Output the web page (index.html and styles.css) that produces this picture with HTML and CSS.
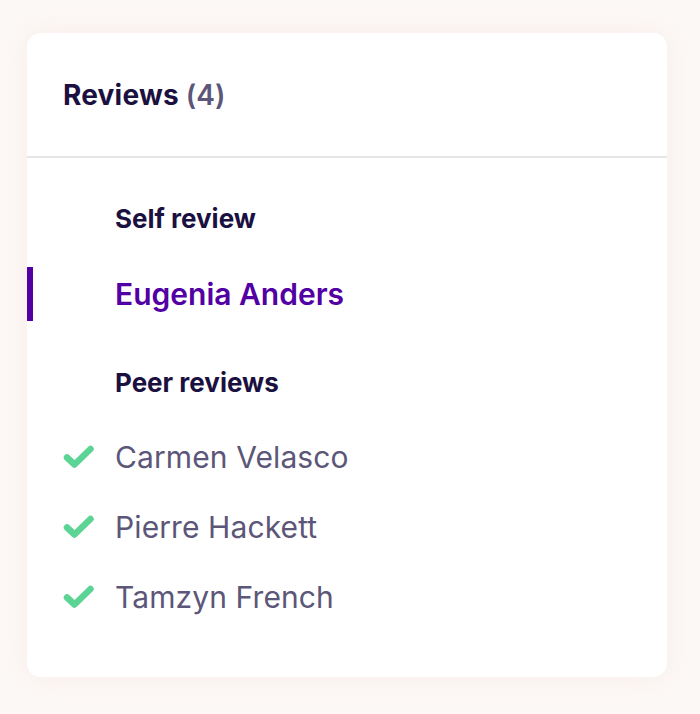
FILE: index.html
```html
<!DOCTYPE html>
<html>
<head>
<meta charset="utf-8">
<link rel="stylesheet" href="styles.css">
</head>
<body>
<div class="page">
  <section class="card">
    <header class="card-header">
      <h2 class="title">Reviews <span class="count">(4)</span></h2>
    </header>
    <div class="card-body">
      <div class="group-label">Self review</div>
      <div class="item active"><span class="marker"></span><span class="icon"></span><span class="name">Eugenia Anders</span></div>
      <div class="group-label peer">Peer reviews</div>
      <div class="item done first"><span class="icon"><svg viewBox="0 0 32 24" width="32" height="24"><path d="M4 12.5 L11.5 19.5 L27.5 4" fill="none" stroke="#5cd495" stroke-width="6.5" stroke-linecap="round" stroke-linejoin="round"/></svg></span><span class="name">Carmen Velasco</span></div>
      <div class="item done"><span class="icon"><svg viewBox="0 0 32 24" width="32" height="24"><path d="M4 12.5 L11.5 19.5 L27.5 4" fill="none" stroke="#5cd495" stroke-width="6.5" stroke-linecap="round" stroke-linejoin="round"/></svg></span><span class="name">Pierre Hackett</span></div>
      <div class="item done"><span class="icon"><svg viewBox="0 0 32 24" width="32" height="24"><path d="M4 12.5 L11.5 19.5 L27.5 4" fill="none" stroke="#5cd495" stroke-width="6.5" stroke-linecap="round" stroke-linejoin="round"/></svg></span><span class="name">Tamzyn French</span></div>
    </div>
  </section>
</div>
</body>
</html>
```
FILE: styles.css
```css
html, body {
  margin: 0;
  padding: 0;
  background: #fcf8f6;
}
body {
  font-family: Inter, "Noto Sans", sans-serif;
  width: 700px;
  height: 714px;
  overflow: hidden;
}
.page {
  padding: 33px 33px 0 27px;
}
.card {
  width: 640px;
  height: 644px;
  background: #ffffff;
  border-radius: 14px;
  box-shadow: 0 0 24px rgba(240, 215, 205, 0.25);
}
.card-header {
  height: 125px;
  border-bottom: 2px solid #e6e6e6;
  display: flex;
  align-items: center;
  padding-left: 36px;
  box-sizing: border-box;
}
.title {
  margin: 0;
  font-size: 28px;
  font-weight: 700;
  color: #1b1140;
  line-height: 34px;
  letter-spacing: 0.2px;
}
.count {
  color: #5c5678;
  font-weight: 600;
}
.card-body {
  padding-top: 40px;
}
.group-label {
  height: 40px;
  display: flex;
  align-items: center;
  padding-left: 88px;
  font-size: 26px;
  font-weight: 700;
  color: #1b1140;
}
.group-label.peer {
  margin-top: 41px;
}
.item {
  position: relative;
  display: flex;
  align-items: center;
  height: 70px;
}
.item.active {
  margin-top: 29px;
  height: 54px;
}
.item.first {
  margin-top: 20px;
}
.marker {
  position: absolute;
  left: 0;
  top: 0;
  width: 6px;
  height: 54px;
  background: #5200a3;
}
.icon {
  width: 88px;
  display: flex;
  padding-left: 36px;
  box-sizing: border-box;
}
.name {
  font-size: 30px;
  color: #5c5678;
  letter-spacing: 0.1px;
}
.item.active .name {
  color: #5200a3;
  font-weight: 600;
  letter-spacing: 0;
}
```
